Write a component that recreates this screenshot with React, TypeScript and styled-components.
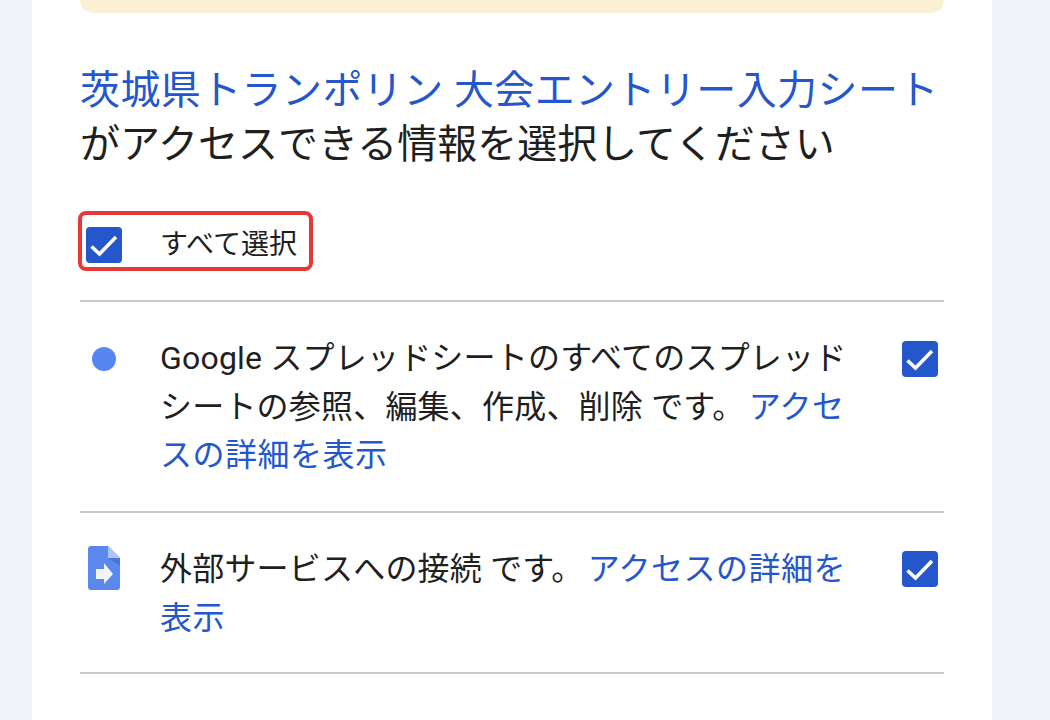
import styled, {createGlobalStyle} from "styled-components";

const colors = {
  page: '#f0f4f9',
  text: '#1f1f1f',
  link: '#2456cc',
  check: '#2456cc',
  line: '#c7c7c7',
  banner: '#fcf0d4',
  marker: '#e53935',
  dot: '#5687f0',
}

const GlobalStyle = createGlobalStyle`
  html, body {
    margin: 0;
    height: 100%;
    overflow: hidden;
    background: ${colors.page};
  }
  body {
    font-family: Roboto, "Noto Sans CJK JP", sans-serif;
    color: ${colors.text};
  }
`

const Card = styled('div')`
  box-sizing: border-box;
  width: 960px;
  height: 720px;
  margin-left: 32px;
  padding: 0 48px;
  background: #fff;
`

const Banner = styled('div')`
  height: 13px;
  background: ${colors.banner};
  border-radius: 0 0 16px 16px;
`

const Title = styled('h1')`
  margin: 51px 0 0;
  font-size: 40px;
  line-height: 54px;
  font-weight: 400;
  white-space: nowrap;
`

const TitleLink = styled('div')`
  color: ${colors.link};
  letter-spacing: 0.4px;
`

const SelectAll = styled('div')`
  box-sizing: border-box;
  display: inline-flex;
  align-items: center;
  gap: 38px;
  width: 235px;
  height: 60px;
  margin: 39px 0 29px -2px;
  padding: 2px 0 0 4px;
  border: 4px solid ${colors.marker};
  border-radius: 8px;
  font-size: 28px;
  white-space: nowrap;
`

const Row = styled('div')<{$height: number}>`
  display: grid;
  grid-template-columns: 80px 1fr 36px;
  height: ${p => p.$height}px;
  box-sizing: border-box;
  padding: 32px 6px 0 0;
  border-top: 2px solid ${colors.line};
`

const RowBottom = styled('div')`
  border-top: 2px solid ${colors.line};
`

const IconCell = styled('div')`
  padding: 1px 0 0 8px;
`

const Dot = styled('div')`
  width: 24px;
  height: 24px;
  margin: 12px 0 0 4px;
  border-radius: 50%;
  background: ${colors.dot};
`

const Text = styled('div')`
  width: 690px;
  font-size: 32px;
  line-height: 48.5px;
  letter-spacing: 0.2px;
`

const Link = styled('a')`
  margin-left: -4px;
  letter-spacing: 0.5px;
  color: ${colors.link};
  text-decoration: none;
`

const Box = styled('div')<{$top: number}>`
  flex: none;
  width: 36px;
  height: 36px;
  margin-top: ${p => p.$top}px;
  border-radius: 4px;
  background: ${colors.check};
  svg {
    display: block;
  }
`

const Check = ({top}: {top: number}) => (
  <Box $top={top}>
    <svg width="36" height="36" viewBox="0 0 36 36" fill="none">
      <path d="M5.5 19.5 L13.5 27 L30 10" stroke="#fff" strokeWidth="3.6"/>
    </svg>
  </Box>
)

const ScriptIcon = () => (
  <svg width="32" height="44" viewBox="0 0 32 44">
    <path d="M3 0 H20 L32 12 V41 a3 3 0 0 1 -3 3 H3 a3 3 0 0 1 -3 -3 V3 a3 3 0 0 1 3 -3z" fill="#5b88ec"/>
    <path d="M20 0 L32 12 H20z" fill="#adc4f6"/>
    <path d="M20 12 L32 12 V20z" fill="#4a74d6"/>
    <path d="M8 23 H16 V17 L25 28 L16 38 V33 H8z" fill="#f1f3f8"/>
  </svg>
)

export default function App() {
  return (
    <>
      <GlobalStyle/>
      <Card>
        <Banner/>
        <Title>
          <TitleLink>茨城県トランポリン 大会エントリー入力シート</TitleLink>
          がアクセスできる情報を選択してください
        </Title>
        <SelectAll>
          <Check top={6}/>
          <span>すべて選択</span>
        </SelectAll>
        <Row $height={211}>
          <IconCell><Dot/></IconCell>
          <Text>
            Google スプレッドシートのすべてのスプレッドシートの参照、編集、作成、削除 です。 <Link>アクセスの詳細を表示</Link>
          </Text>
          <Check top={7}/>
        </Row>
        <Row $height={161}>
          <IconCell><ScriptIcon/></IconCell>
          <Text>
            外部サービスへの接続 です。 <Link>アクセスの詳細を表示</Link>
          </Text>
          <Check top={6}/>
        </Row>
        <RowBottom/>
      </Card>
    </>
  );
}
